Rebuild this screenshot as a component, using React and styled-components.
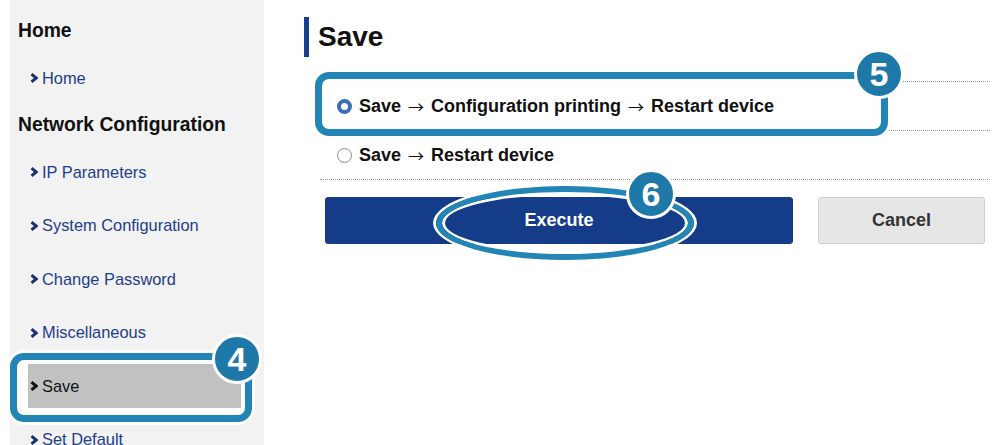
import styled, { createGlobalStyle } from "styled-components";

const NAV = [
  { heading: "Home", links: ["Home"] },
  {
    heading: "Network Configuration",
    links: [
      "IP Parameters",
      "System Configuration",
      "Change Password",
      "Miscellaneous",
      "Save",
      "Set Default",
    ],
  },
];

const ACTIVE = "Save";

const OPTIONS = [
  { id: "print", steps: ["Save", "Configuration printing", "Restart device"], checked: true },
  { id: "restart", steps: ["Save", "Restart device"], checked: false },
];

function Chevron({ active }) {
  return (
    <StyledChevron viewBox="0 0 8 10" $active={active}>
      <polyline points="1.5,1.2 6.2,5 1.5,8.8" />
    </StyledChevron>
  );
}

function App() {
  return (
    <>
      <GlobalStyle />
      <StyledPage>
        <StyledSidebar>
          {NAV.map((group) => (
            <StyledGroup key={group.heading}>
              <StyledHeading>{group.heading}</StyledHeading>
              <StyledLinks>
                {group.links.map((link) => (
                  <StyledLink key={link} $active={link === ACTIVE}>
                    <Chevron active={link === ACTIVE} />
                    {link}
                  </StyledLink>
                ))}
              </StyledLinks>
            </StyledGroup>
          ))}
        </StyledSidebar>

        <StyledMain>
          <StyledTitle>Save</StyledTitle>
          <StyledOptions>
            <StyledRule />
            {OPTIONS.map((opt) => (
              <div key={opt.id}>
                <StyledOption>
                  <StyledRadio $checked={opt.checked} />
                  {opt.steps.map((step, i) => (
                    <span key={step}>
                      {i > 0 && <StyledArrow>→</StyledArrow>}
                      {step}
                    </span>
                  ))}
                </StyledOption>
                <StyledRule />
              </div>
            ))}
            <StyledButtons>
              <StyledButton $primary>Execute</StyledButton>
              <StyledButton>Cancel</StyledButton>
            </StyledButtons>
          </StyledOptions>
        </StyledMain>

        {/* callouts drawn over the page */}
        <StyledFrame $x={10} $y={353} $w={242} $h={69} />
        <StyledBadge $cx={237} $cy={359}>4</StyledBadge>
        <StyledFrame $x={315} $y={72} $w={573} $h={64} />
        <StyledBadge $cx={879} $cy={74}>5</StyledBadge>
        <StyledRing />
        <StyledBadge $cx={651} $cy={194}>6</StyledBadge>
      </StyledPage>
    </>
  );
}
export default App;

const GlobalStyle = createGlobalStyle`
  body {
    margin: 0;
    background: #fff;
    font-family: "Liberation Sans", Arial, sans-serif;
  }
`;

const StyledPage = styled.div`
  position: relative;
  width: 1000px;
  height: 445px;
  overflow: hidden;
  display: flex;
  align-items: flex-start;
`;

const StyledSidebar = styled.nav`
  width: 254px;
  height: 445px;
  margin-left: 10px;
  padding: 11px 0 0 8px;
  box-sizing: border-box;
  background: #f2f2f2;
  flex-shrink: 0;
  display: flex;
  flex-direction: column;
  gap: 5px;
`;

const StyledGroup = styled.div`
  display: flex;
  flex-direction: column;
`;

const StyledHeading = styled.h2`
  margin: 0;
  height: 40px;
  display: flex;
  align-items: center;
  color: #111;
  font-size: 19.3px;
  font-weight: 700;
`;

const StyledLinks = styled.div`
  display: flex;
  flex-direction: column;
  gap: 9.5px;
  margin: 5px 0 0 10px;
`;

const StyledLink = styled.a`
  position: relative;
  z-index: 2;
  width: 213px;
  height: 44px;
  padding-left: 2px;
  box-sizing: border-box;
  display: flex;
  align-items: center;
  gap: 4px;
  font-size: 16.4px;
  color: ${(p) => (p.$active ? "#111" : "#1e3d8a")};
  background: ${(p) => (p.$active ? "#c1c1c1" : "transparent")};
`;

const StyledChevron = styled.svg`
  width: 8px;
  height: 10px;
  flex-shrink: 0;
  fill: none;
  stroke: ${(p) => (p.$active ? "#111" : "#1a2f6e")};
  stroke-width: 3;
  stroke-linejoin: miter;
`;

const StyledMain = styled.main`
  flex: 1;
  padding: 17px 0 0 40px;
`;

const StyledTitle = styled.h1`
  margin: 0;
  height: 40px;
  display: flex;
  align-items: center;
  border-left: 5px solid #173f8f;
  padding-left: 9px;
  color: #111;
  font-size: 28px;
  font-weight: 700;
`;

const StyledOptions = styled.div`
  width: 670px;
  margin: 24px 0 0 16px;
`;

const StyledRule = styled.div`
  border-top: 1px dotted #9a9a9a;
`;

const StyledOption = styled.label`
  position: relative;
  z-index: 2;
  height: 48px;
  padding-left: 17px;
  display: flex;
  align-items: center;
  color: #111;
  font-size: 18px;
  font-weight: 700;
  line-height: 20px;
`;

const StyledArrow = styled.span`
  display: inline-block;
  margin: 0 7px;
  font-family: "Noto Sans CJK JP", "DejaVu Sans", sans-serif;
  font-size: 16px;
  font-weight: 400;
  line-height: 20px;
  vertical-align: top;
`;

const StyledRadio = styled.span`
  width: 15px;
  height: 15px;
  box-sizing: border-box;
  border-radius: 50%;
  margin-right: 7px;
  background: #fff;
  border: ${(p) => (p.$checked ? "4px solid #3a6dbd" : "1px solid #8a8a8a")};
`;

const StyledButtons = styled.div`
  margin-top: 17px;
  padding: 0 5px;
  display: flex;
  gap: 25px;
`;

const StyledButton = styled.button`
  height: 47px;
  width: ${(p) => (p.$primary ? "468px" : "167px")};
  border-radius: 3px;
  border: 1px solid ${(p) => (p.$primary ? "#143c8a" : "#cfcfcf")};
  background: ${(p) => (p.$primary ? "#153c89" : "#e6e6e6")};
  color: ${(p) => (p.$primary ? "#fff" : "#333")};
  font-family: "Liberation Sans", Arial, sans-serif;
  font-size: 18px;
  font-weight: 700;
`;

const StyledFrame = styled.div`
  position: absolute;
  z-index: 1;
  left: ${(p) => p.$x}px;
  top: ${(p) => p.$y}px;
  width: ${(p) => p.$w}px;
  height: ${(p) => p.$h}px;
  box-sizing: border-box;
  border: 7px solid #2285b5;
  border-radius: 14px;
  background: #fff;
  box-shadow: 0 0 0 3px #fff;
`;

const StyledRing = styled.div`
  position: absolute;
  z-index: 3;
  left: 436px;
  top: 186px;
  width: 258px;
  height: 74px;
  box-sizing: border-box;
  border: 6px solid #2285b5;
  border-radius: 50%;
  box-shadow: 0 0 0 3px #fff, inset 0 0 0 3px #fff;
`;

const StyledBadge = styled.div`
  position: absolute;
  z-index: 4;
  left: ${(p) => p.$cx - 25}px;
  top: ${(p) => p.$cy - 25}px;
  width: 50px;
  height: 50px;
  box-sizing: border-box;
  border-radius: 50%;
  border: 3px solid #fff;
  background: #1f79a8;
  color: #fff;
  display: flex;
  align-items: center;
  justify-content: center;
  font-size: 34px;
  font-weight: 700;
`;
